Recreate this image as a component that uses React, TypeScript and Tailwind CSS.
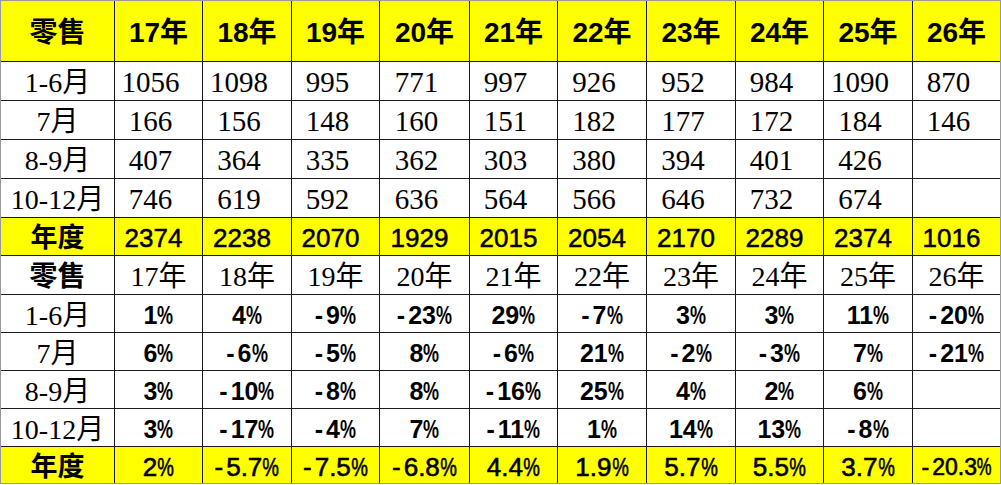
const cols = ["17年", "18年", "19年", "20年", "21年", "22年", "23年", "24年", "25年", "26年"]

const sales = [
  ["1-6月", "1056", "1098", "995", "771", "997", "926", "952", "984", "1090", "870"],
  ["7月", "166", "156", "148", "160", "151", "182", "177", "172", "184", "146"],
  ["8-9月", "407", "364", "335", "362", "303", "380", "394", "401", "426", ""],
  ["10-12月", "746", "619", "592", "636", "564", "566", "646", "732", "674", ""],
]

const salesTotal = ["2374", "2238", "2070", "1929", "2015", "2054", "2170", "2289", "2374", "1016"]

const growth = [
  ["1-6月", "1%", "4%", "-9%", "-23%", "29%", "-7%", "3%", "3%", "11%", "-20%"],
  ["7月", "6%", "-6%", "-5%", "8%", "-6%", "21%", "-2%", "-3%", "7%", "-21%"],
  ["8-9月", "3%", "-10%", "-8%", "8%", "-16%", "25%", "4%", "2%", "6%", ""],
  ["10-12月", "3%", "-17%", "-4%", "7%", "-11%", "1%", "14%", "13%", "-8%", ""],
]

const growthTotal = ["2%", "-5.7%", "-7.5%", "-6.8%", "4.4%", "1.9%", "5.7%", "5.5%", "3.7%", "-20.3%"]

const sans = "font-['Liberation_Sans','Noto_Sans_CJK_SC',sans-serif]"
const serif = "font-['Liberation_Serif','Noto_Sans_CJK_SC',serif]"

const cell = "flex items-center justify-center pt-1 whitespace-nowrap text-black"

// the % sign in the sheet is drawn narrow, and the minus sits apart from the digits
const Pct = ({ v }: { v: string }) => {
  if (!v) return null
  const neg = v.startsWith("-")
  const num = v.replace("-", "").replace("%", "")
  return (
    <span>
      {neg && <span className="mr-[3px]">-</span>}
      {num}
      <span className="inline-block scale-x-[0.72] -mx-[3px]">%</span>
    </span>
  )
}

const App = () => {
  return (
    <div className="w-[1001px] h-[485px] bg-white">
      <div className="w-[1001px] border border-[#9a9a9a]">
        <div className="grid gap-px bg-[#1a1a1a] grid-cols-[113px_87px_88px_87px_89px_87px_88px_88px_87px_88px_87px] grid-rows-[60px_38px_38px_38px_38px_37px_38px_37px_37px_37px_37px_36px]">
          {/* header */}
          <div className={`${cell} ${sans} bg-[#ffff00] text-[28px] font-bold`}>零售</div>
          {cols.map((c) => (
            <div key={"h" + c} className={`${cell} ${sans} bg-[#ffff00] text-[28px] font-bold`}>
              {c}
            </div>
          ))}

          {/* sales rows */}
          {sales.map((row) =>
            row.map((v, i) => (
              <div
                key={"s" + row[0] + i}
                className={`${cell} ${serif} bg-white ${i > 0 ? "pr-4 text-[29px]" : "text-[28px]"}`}
              >
                {v}
              </div>
            ))
          )}

          <div className={`${cell} ${sans} bg-[#ffff00] text-[27px] font-bold`}>年度</div>
          {salesTotal.map((v, i) => (
            <div
              key={"st" + i}
              className={`${cell} ${sans} bg-[#ffff00] text-[26px] pr-2.5 [-webkit-text-stroke:0.5px_black]`}
            >
              {v}
            </div>
          ))}

          {/* second header */}
          <div className={`${cell} ${sans} bg-white text-[28px] font-bold`}>零售</div>
          {cols.map((c) => (
            <div key={"h2" + c} className={`${cell} ${serif} bg-white text-[28px]`}>
              {c}
            </div>
          ))}

          {/* growth rows */}
          {growth.map((row) =>
            row.map((v, i) =>
              i === 0 ? (
                <div key={"g" + row[0] + i} className={`${cell} ${serif} bg-white text-[28px]`}>
                  {v}
                </div>
              ) : (
                <div key={"g" + row[0] + i} className={`${cell} ${sans} bg-white text-[25px] font-bold`}>
                  <Pct v={v} />
                </div>
              )
            )
          )}

          <div className={`${cell} ${sans} bg-[#ffff00] text-[27px] font-bold`}>年度</div>
          {growthTotal.map((v, i) => (
            <div
              key={"gt" + i}
              className={`${cell} ${sans} bg-[#ffff00] [-webkit-text-stroke:0.6px_black] ${v.length > 5 ? "text-[23px]" : "text-[26px]"}`}
            >
              <Pct v={v} />
            </div>
          ))}
        </div>
      </div>
    </div>
  )
}

export default App
